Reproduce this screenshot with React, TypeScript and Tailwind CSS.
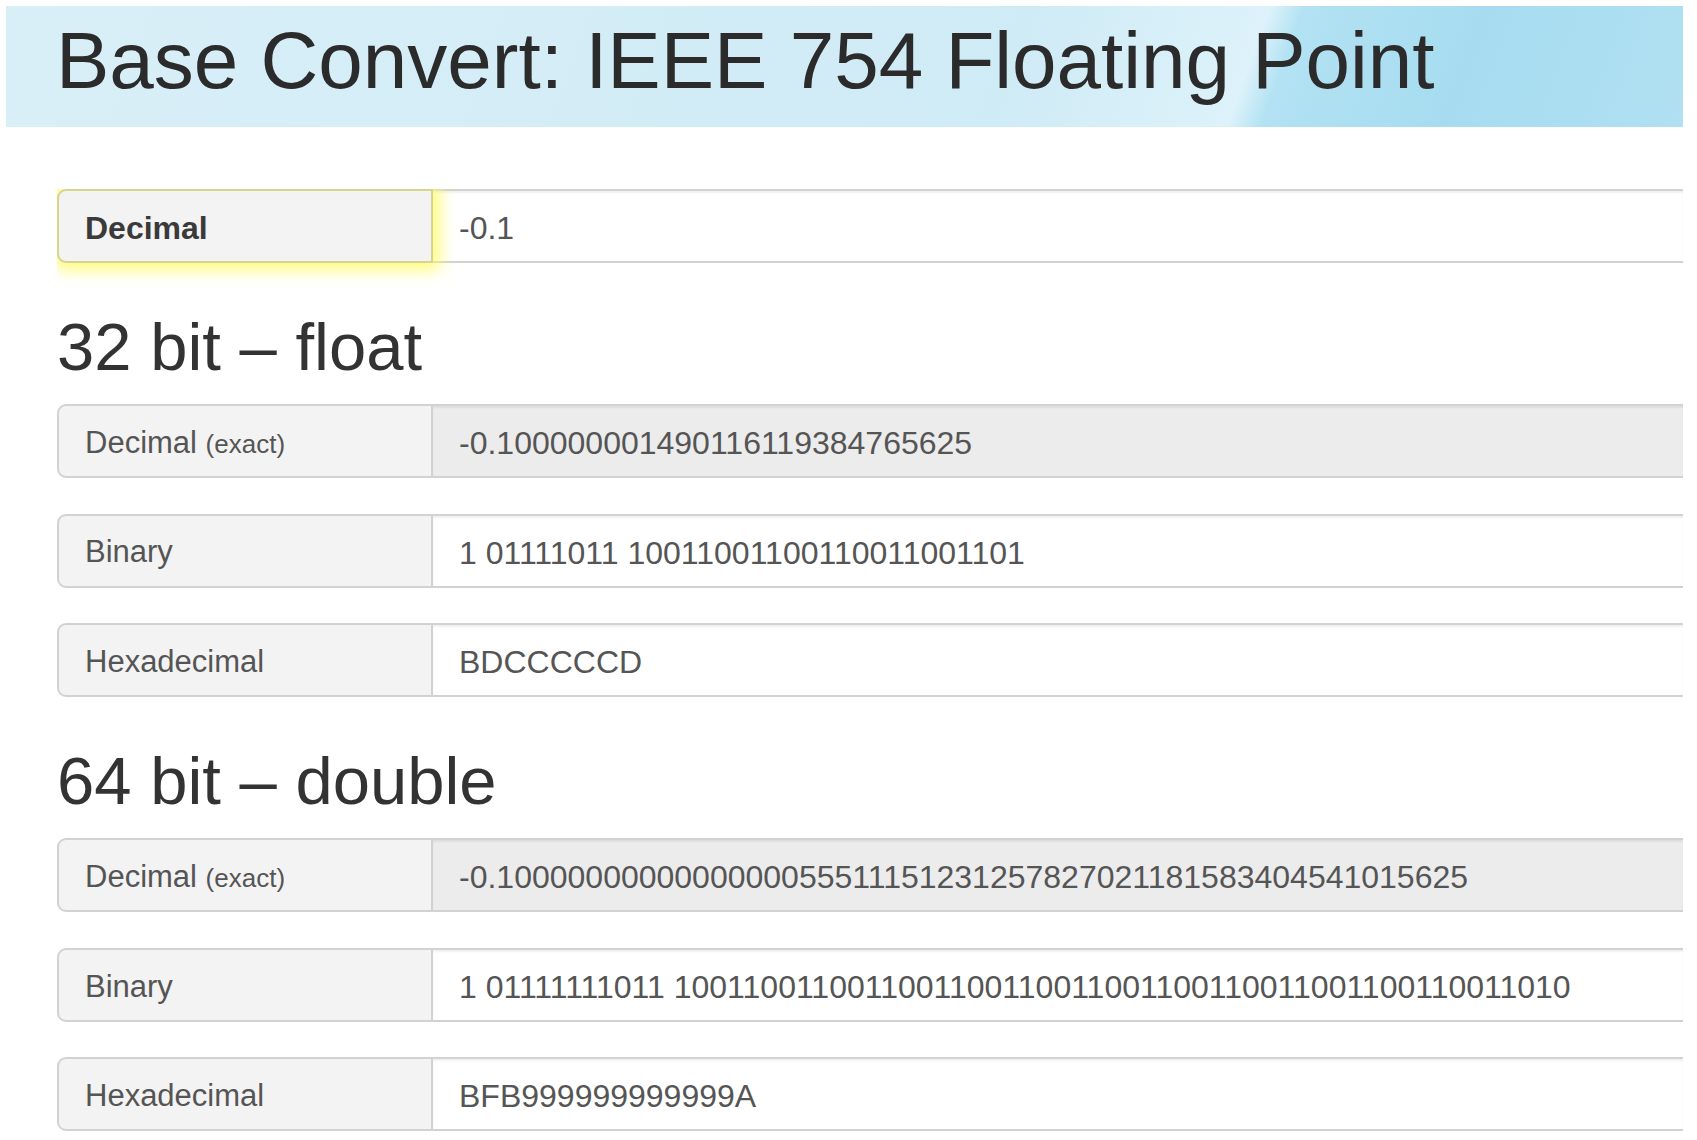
import React from "react";

type RowProps = {
  label: React.ReactNode;
  value: string;
  readOnly?: boolean;
  focused?: boolean;
};

const Row = ({ label, value, readOnly, focused }: RowProps) => {
  return (
    <div className="flex h-[74px] w-full">
      <div
        className={
          focused
            ? "relative z-10 flex w-[376px] shrink-0 items-center rounded-l-[9px] border-2 border-[#d6d48f] bg-[#f3f3f3] pl-[26px] pt-[4px] text-[32px] font-bold text-[#3a3a3a] shadow-[0_0_16px_7px_rgba(255,250,100,0.85)]"
            : "flex w-[376px] shrink-0 items-center rounded-l-[9px] border-2 border-[#d2d2d2] bg-[#f3f3f3] pl-[26px] pt-[4px] text-[31px] text-[#555]"
        }
      >
        {label}
      </div>
      <div
        className={
          "flex flex-1 items-center border-y-2 border-[#d2d2d2] pl-[26px] pt-[4px] text-[32px] text-[#555] shadow-[inset_0_2px_2px_rgba(0,0,0,0.06)] " +
          (readOnly ? "bg-[#ececec]" : "bg-white")
        }
      >
        {value}
      </div>
    </div>
  );
};

const Exact = () => (
  <span>
    Decimal <span className="text-[26px]">(exact)</span>
  </span>
);

const Section = ({
  title,
  rows,
}: {
  title: string;
  rows: { exact: string; binary: string; hex: string };
}) => {
  return (
    <div>
      <h2 className="mb-[21px] mt-[46.5px] text-[67px] leading-[1.1] text-[#333]">
        {title}
      </h2>
      <div className="flex flex-col gap-[35.5px]">
        <Row label={<Exact />} value={rows.exact} readOnly />
        <Row label="Binary" value={rows.binary} />
        <Row label="Hexadecimal" value={rows.hex} />
      </div>
    </div>
  );
};

export default function App() {
  return (
    <div className="h-[1140px] w-[1697px] overflow-hidden bg-white font-['Liberation_Sans',Arial,sans-serif]">
      <div className="w-[1683px] pl-[6px] pt-[6px]">
        <div className="h-[121px] bg-[linear-gradient(110deg,#d9eff8_0%,#cfebf6_60%,#ddf2fa_73.5%,#b2e2f3_75.5%,#a7dcf0_86%,#b0e0f2_100%)] pl-[50px] pt-[15px]">
          <h1 className="text-[80px] leading-none text-[#2b2b2b]">
            Base Convert: IEEE 754 Floating Point
          </h1>
        </div>
        <div className="ml-[51px] mt-[62px] overflow-hidden">
          <Row label="Decimal" value="-0.1" focused />
          <Section
            title="32 bit – float"
            rows={{
              exact: "-0.100000001490116119384765625",
              binary: "1 01111011 10011001100110011001101",
              hex: "BDCCCCCD",
            }}
          />
          <Section
            title="64 bit – double"
            rows={{
              exact: "-0.1000000000000000055511151231257827021181583404541015625",
              binary:
                "1 01111111011 1001100110011001100110011001100110011001100110011010",
              hex: "BFB999999999999A",
            }}
          />
        </div>
      </div>
    </div>
  );
}
